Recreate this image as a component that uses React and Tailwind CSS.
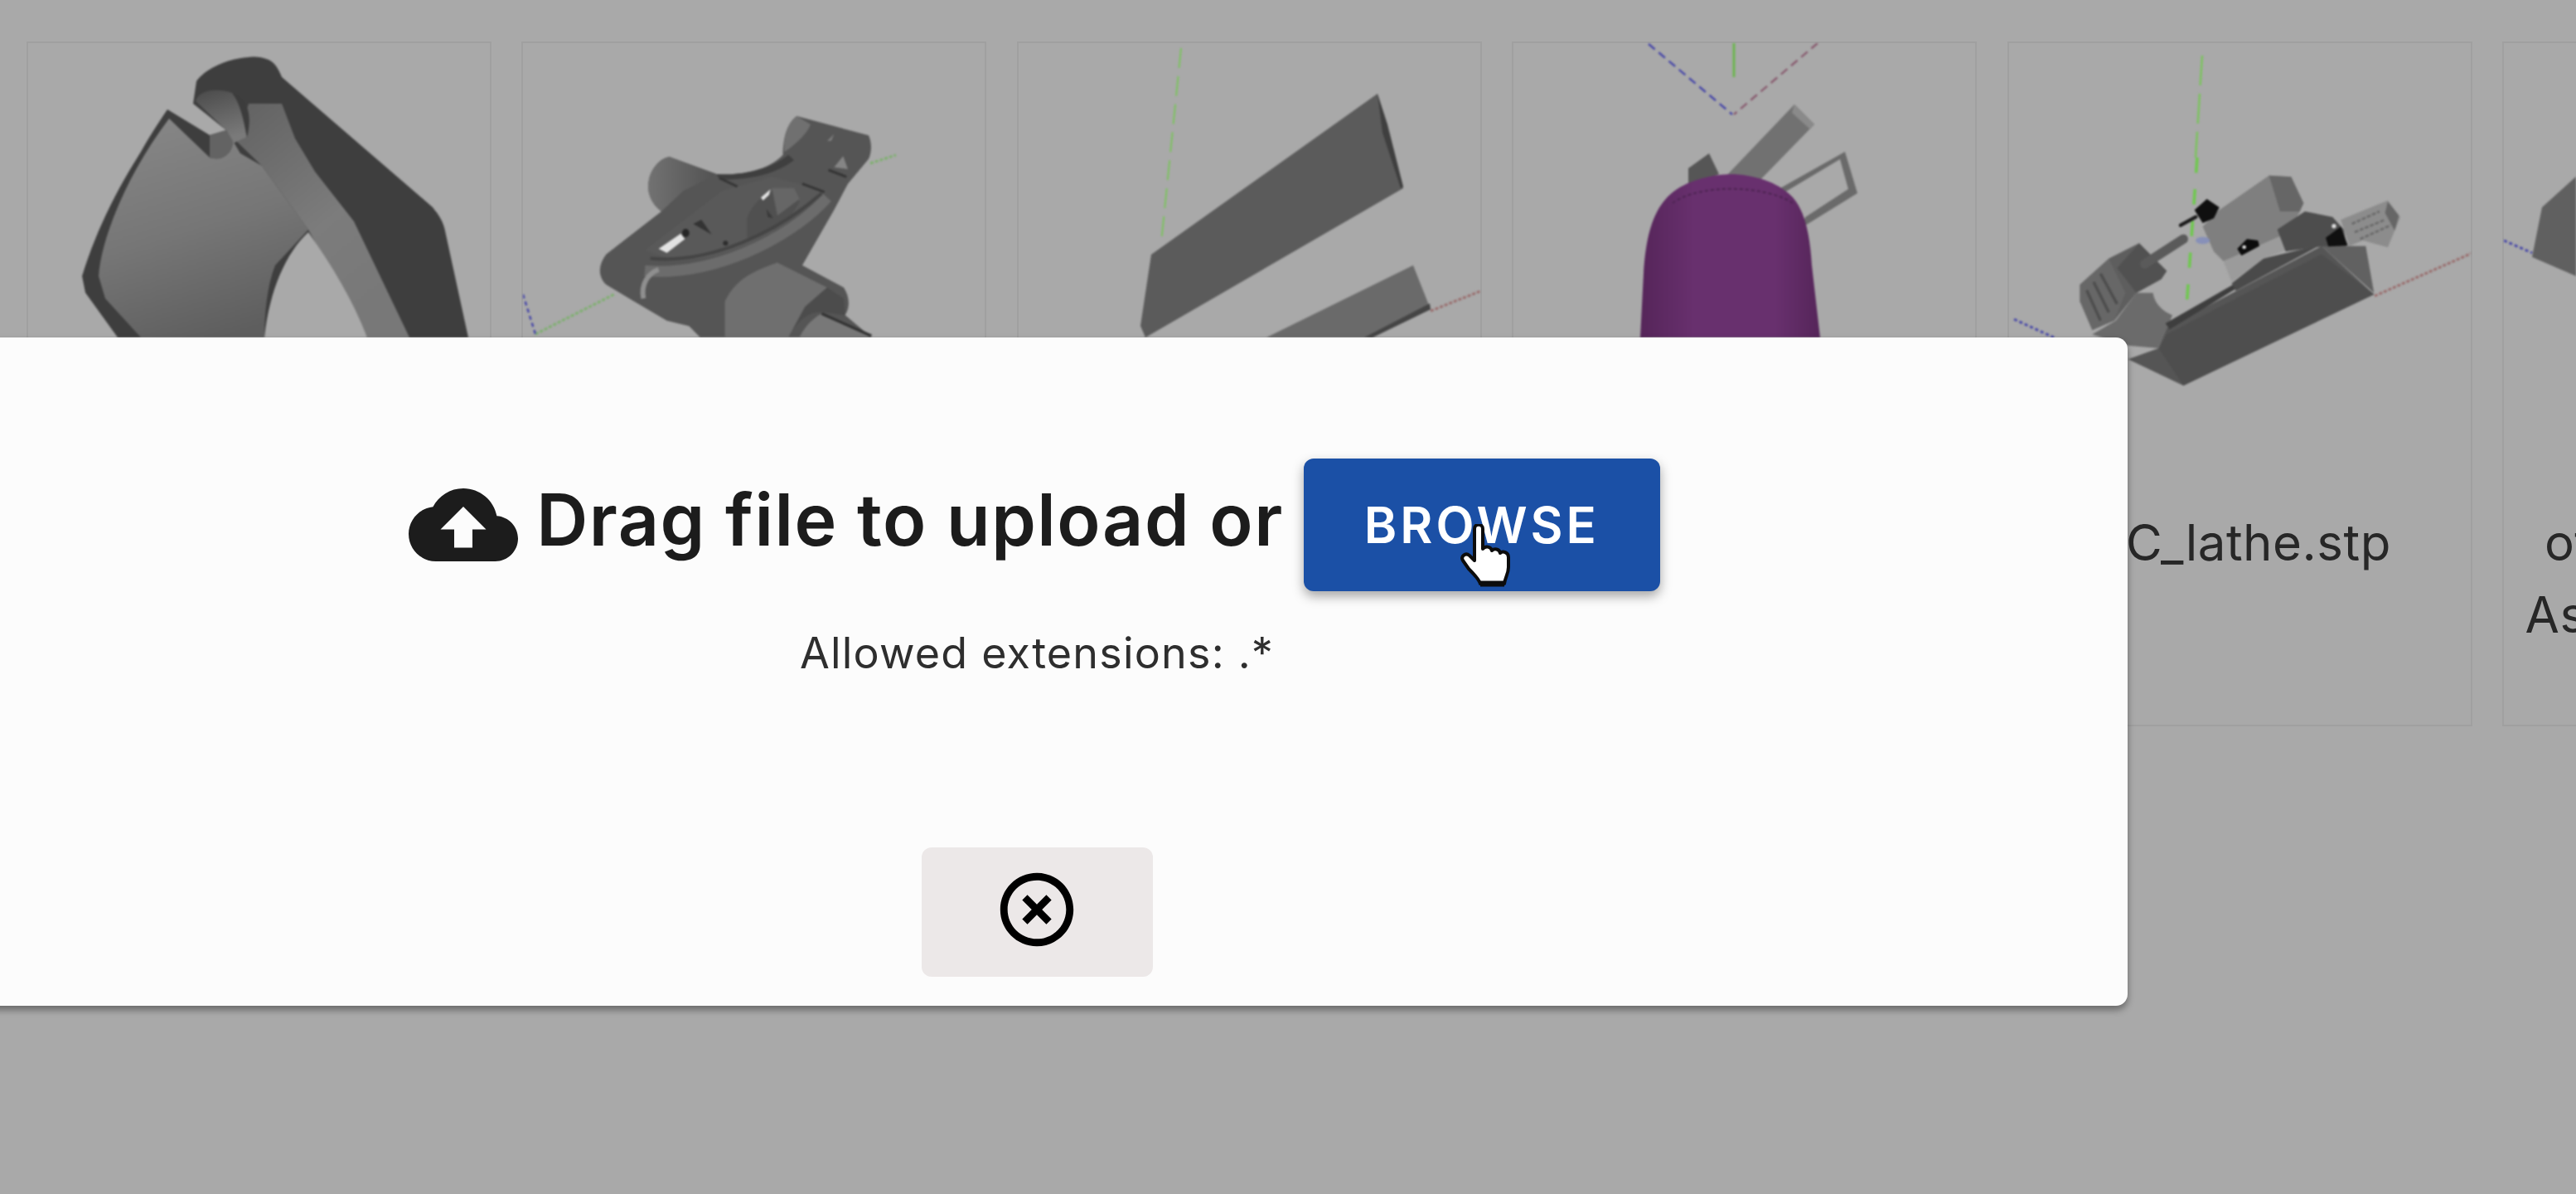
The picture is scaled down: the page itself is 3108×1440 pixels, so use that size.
import React from "react";

const FONT = "font-['Inter','Liberation_Sans',sans-serif]";

/* thumbnails use page coordinates, the viewBox shifts them into the card */
const Thumb = ({ x, children }) => (
  <svg
    viewBox={`${x + 2} 52 557 559`}
    className="block w-[557px] h-[559px] shrink-0 blur-[0.8px]"
  >
    {children}
  </svg>
);

const Bracket = () => (
  <Thumb x={32}>
    <defs>
      <linearGradient id="faceA" x1="0.3" y1="0" x2="0.6" y2="1">
        <stop offset="0" stopColor="#868686" />
        <stop offset="0.5" stopColor="#767676" />
        <stop offset="1" stopColor="#5e5e5e" />
      </linearGradient>
      <linearGradient id="stripA" x1="0" y1="0" x2="0.6" y2="1">
        <stop offset="0" stopColor="#626262" />
        <stop offset="0.6" stopColor="#7c7c7c" />
        <stop offset="1" stopColor="#787878" />
      </linearGradient>
      <linearGradient id="hookA" x1="0" y1="0" x2="0.3" y2="1">
        <stop offset="0" stopColor="#4a4a4a" />
        <stop offset="1" stopColor="#7a7a7a" />
      </linearGradient>
    </defs>
    {/* dark silhouette */}
    <path
      d="M202 132 C190 150 180 165 170 183 C150 215 120 265 99 333 L103 353 L142 407 L565 407 L538 283 C535 265 528 258 522 250 L340 93 C335 80 330 75 324 72 C315 68 305 68 300 69 C280 70 250 80 237 98 L233 125 L273 157 L253 163 Z"
      fill="#3e3e3e"
    />
    {/* main face */}
    <path
      d="M204 143 L253 190 C268 195 281 185 281 170 L290 185 L316 200 L372 277 L332 320 C322 345 319 380 319 407 L170 407 L127 360 L119 333 C122 290 150 215 204 143 Z"
      fill="url(#faceA)"
    />
    {/* light strip beside the dark band */}
    <path d="M316 200 L372 277 L443 407 L494 407 L427 267 L380 207 L356 167 L340 125 L300 125 L285 170 Z" fill="url(#stripA)" />
    {/* hole through the part */}
    <path d="M372 280 C345 305 325 350 319 407 L443 407 C425 360 400 320 372 280 Z" fill="#a9a9a9" />
    {/* hook around the slot */}
    <path d="M236 122 C240 108 262 106 280 112 C296 120 304 140 298 165 L281 173 L273 157 Z" fill="url(#hookA)" />
    <path d="M280 112 C296 116 306 136 298 166 C294 145 290 125 280 112 Z" fill="#3c3c3c" />
    <path d="M253 163 L273 157 L281 170 C281 185 268 195 253 190 Z" fill="#636363" />
  </Thumb>
);

const Clamp = () => (
  <Thumb x={631}>
    <defs>
      <linearGradient id="lobeA" x1="0" y1="0" x2="1" y2="0">
        <stop offset="0" stopColor="#727272" />
        <stop offset="1" stopColor="#525252" />
      </linearGradient>
    </defs>
    <path d="M648 403 L743 355" stroke="#7fb070" strokeWidth="3" strokeDasharray="4 2" />
    <path d="M1052 197 L1083 187" stroke="#7fb070" strokeWidth="3" strokeDasharray="4 2" />
    <path d="M633 355 L648 403" stroke="#4a4aa8" strokeWidth="2.5" strokeDasharray="5 4" />
    <g transform="translate(700 130) scale(0.3333)">
      <path
        d="M790 30 L1050 100 C1062 125 1062 160 1050 185 L975 275 L925 370 L810 570 L960 650 C980 680 985 720 965 750 L1060 830 L440 830 L400 790 L320 770 L200 700 L100 640 C70 610 70 570 100 530 L300 375 C260 345 245 300 255 260 C265 215 300 180 330 178 L500 240 C560 245 680 235 740 170 C740 120 750 60 790 30 Z"
        fill="#555555"
      />
      <path d="M300 375 C260 345 245 300 255 260 C265 215 300 180 330 178 L500 240 L380 300 Z" fill="url(#lobeA)" />
      <path d="M790 30 C750 60 740 120 745 160 C790 130 830 90 840 60 Z" fill="#707070" />
      {/* top plate */}
      <path d="M240 515 L520 300 L700 250 L890 300 L800 380 C700 470 500 570 330 545 Z" fill="#595959" />
      <path d="M610 400 C630 340 690 290 760 290 L800 340 C760 420 690 460 610 470 Z" fill="#505050" />
      <path d="M700 290 L780 290 L800 330 L720 390 Z" fill="#666666" />
      <path d="M500 240 C560 245 680 235 760 170 L780 190 C700 250 600 260 510 260 Z" fill="#3f3f3f" />
      {/* rib */}
      <path d="M240 590 C480 610 760 480 900 325" stroke="#6c6c6c" strokeWidth="40" fill="none" />
      <path d="M260 545 C480 565 720 450 880 310" stroke="#444444" strokeWidth="12" fill="none" />
      {/* lower barrel */}
      <path d="M530 700 C560 640 600 600 720 560 L900 650 L820 720 L760 830 L530 830 Z" fill="#6f6f6f" />
      <path d="M760 830 C790 770 840 730 890 740 L965 750 L960 690 L900 650 L820 720 Z" fill="#4c4c4c" />
      <path d="M880 745 L1060 830 L800 830 C820 790 850 760 880 745 Z" fill="#787878" />
      <path d="M880 745 L1060 825" stroke="#333333" strokeWidth="10" />
      <path d="M235 690 C225 640 250 600 290 585" stroke="#8f8f8f" strokeWidth="18" fill="none" />
      {/* holes and small details */}
      <path d="M290 510 L370 455 L385 475 L320 525 Z" fill="#e2e2e2" />
      <path d="M660 325 L695 295 L690 315 L668 335 Z" fill="#e2e2e2" />
      <ellipse cx="388" cy="453" rx="13" ry="15" fill="#262626" />
      <circle cx="532" cy="490" r="9" fill="#2e2e2e" />
      <path d="M415 420 L445 405 L482 458 Z" fill="#333333" />
      <path d="M680 365 L705 400 L685 395 Z" fill="#3a3a3a" />
      <path d="M512 255 L575 285 M810 275 L890 305 M905 225 L970 250" stroke="#353535" strokeWidth="9" />
      <path d="M925 215 L958 175 L975 222 Z" fill="#858585" />
      <path d="M900 120 L925 95 L915 120 Z" fill="#7c7c7c" />
    </g>
  </Thumb>
);

const Blades = () => (
  <Thumb x={1227}>
    <path d="M1425 58 L1401 293" stroke="#7cc35f" strokeWidth="2" strokeDasharray="24 10" />
    <path d="M1726 375 L1789 350" stroke="#9a6f6f" strokeWidth="3" strokeDasharray="4 2" />
    <path d="M1662 113 L1693 227 L1382 407 L1376 393 L1389 307 Z" fill="#5b5b5b" />
    <path d="M1662 113 L1674 150 L1693 225 L1690 227 L1668 160 Z" fill="#3f3f3f" />
    <path d="M1705 320 L1726 373 L1656 407 L1528 407 Z" fill="#6a6a6a" />
    <path d="M1726 373 L1656 407 L1646 407 L1725 366 Z" fill="#454545" />
  </Thumb>
);

const Cylinder = () => (
  <Thumb x={1826}>
    <defs>
      <linearGradient id="purpleA" x1="0" y1="0" x2="1" y2="0">
        <stop offset="0" stopColor="#552559" />
        <stop offset="0.3" stopColor="#68306e" />
        <stop offset="0.75" stopColor="#68306e" />
        <stop offset="1" stopColor="#552559" />
      </linearGradient>
    </defs>
    <path d="M2094 50 L2094 93" stroke="#6cb650" strokeWidth="3" />
    <path d="M1991 53 L2092 138" stroke="#4a4aa8" strokeWidth="2.5" strokeDasharray="10 6" />
    <path d="M2195 52 L2094 138" stroke="#8a5f72" strokeWidth="2.5" strokeDasharray="10 6" />
    <path d="M2167 126 L2191 150 L2118 225 L2082 215 Z" fill="#717171" />
    <path d="M2167 126 L2191 150 L2186 156 L2164 136 Z" fill="#8a8a8a" />
    <path d="M2228 183 L2243 233 L2175 275 L2180 262 L2232 228 L2222 192 L2150 235 L2148 228 Z" fill="#6a6a6a" />
    <path d="M2064 185 L2076 210 L2039 225 L2039 203 Z" fill="#565656" />
    <path
      d="M1981 407 L1985 330 C1988 280 1998 250 2020 232 C2040 216 2070 210 2094 210 C2125 212 2150 222 2165 238 C2180 255 2186 285 2188 320 L2198 407 Z"
      fill="url(#purpleA)"
    />
    <path d="M2020 245 C2050 222 2130 222 2165 245" stroke="#4d2452" strokeWidth="2" strokeDasharray="4 3" fill="none" />
  </Thumb>
);

const Lathe = () => (
  <Thumb x={2421}>
    <path d="M2429 385 L2477 407" stroke="#4a4aa8" strokeWidth="3" strokeDasharray="4 3" />
    <path d="M2864 357 L2982 305" stroke="#9a6f6f" strokeWidth="3" strokeDasharray="4 2" />
    <path d="M2656 67 L2648 190" stroke="#7cc35f" strokeWidth="2.5" strokeDasharray="36 10" />
    <g transform="translate(2480 190) scale(0.3333)">
      <path d="M510 0 L470 560" stroke="#70c850" strokeWidth="11" strokeDasharray="55 60" />
      {/* base */}
      <path d="M960 320 L1120 320 L1150 490 Z" fill="#616161" />
      <path d="M400 615 L960 320 L1150 495 L460 825 L260 730 L370 690 Z" fill="#555555" />
      <path d="M400 640 L960 350 L1150 495 L460 825 L370 690 Z" fill="#4e4e4e" />
      {/* headstock */}
      <path d="M215 590 L290 490 L350 490 C355 530 390 560 420 570 L400 620 L370 690 L260 680 L130 640 Z" fill="#6b6b6b" />
      <path d="M190 365 L300 310 L290 490 L210 590 Z" fill="#5e5e5e" />
      <path d="M85 460 L190 365 L250 490 L210 590 L130 625 L85 520 Z" fill="#676767" />
      <path d="M110 480 L160 590 M135 450 L190 560 M160 420 L220 530" stroke="#4d4d4d" strokeWidth="10" />
      <path d="M220 400 L300 310 L400 410 L380 440 L290 490 Z" fill="#515151" />
      <path d="M320 385 L460 295" stroke="#5a5a5a" strokeWidth="34" strokeLinecap="round" />
      {/* rail */}
      <path d="M395 600 L640 460 L650 475 L410 622 Z" fill="#3e3e3e" />
      <path d="M635 455 L750 365 L960 315 L650 482 Z" fill="#4a4a4a" />
      {/* turret */}
      <path d="M590 190 L770 65 L850 70 L895 165 L880 200 L820 285 L605 375 L570 340 L530 250 Z" fill="#7f7f7f" />
      <path d="M770 65 L850 70 L895 165 L880 195 L810 195 Z" fill="#666666" />
      <path d="M450 245 L505 215" stroke="#1c1c1c" strokeWidth="13" strokeLinecap="round" />
      <path d="M500 190 L545 150 L590 180 L570 220 L530 237 Z" fill="#0f0f0f" />
      <ellipse cx="530" cy="300" rx="26" ry="13" fill="#8790b8" />
      {/* carriage */}
      <path d="M605 375 L820 280 L832 335 L750 365 L635 450 Z" fill="#9b9b9b" />
      <path d="M655 330 L690 295 L730 300 L735 320 L670 355 Z" fill="#0c0c0c" />
      <circle cx="680" cy="324" r="7" fill="#e0e0e0" />
      {/* right side mechanism */}
      <path d="M800 260 L900 195 L1000 215 L1040 260 L1050 320 L960 322 L830 340 Z" fill="#4d4d4d" />
      <path d="M975 290 L1030 250 L1055 318 L985 322 Z" fill="#101010" />
      <circle cx="1005" cy="248" r="8" fill="#dcdcdc" />
      <path d="M1030 225 L1200 155 L1245 215 L1200 325 L1110 300 L1060 320 Z" fill="#8c8c8c" />
      <path d="M1070 240 L1170 195 M1080 270 L1190 225 M1100 295 L1210 245" stroke="#6a6a6a" strokeWidth="8" strokeDasharray="14 6" />
      <path d="M1200 160 L1240 210 L1225 265 L1190 200 Z" fill="#666666" />
    </g>
  </Thumb>
);

const Partial = () => (
  <Thumb x={3019}>
    <path d="M3021 290 L3055 305" stroke="#4a4aa8" strokeWidth="3" strokeDasharray="4 3" />
    <path d="M3108 213 L3067 250 L3055 310 L3108 333 Z" fill="#606060" />
  </Thumb>
);

const cards = [
  { x: 32, art: <Bracket /> },
  { x: 631, art: <Clamp /> },
  { x: 1227, art: <Blades /> },
  { x: 1826, art: <Cylinder /> },
  { x: 2421, art: <Lathe />, lines: ["NC_lathe.stp"] },
  { x: 3019, art: <Partial />, lines: ["offset_bracket_1", "Assembly_M2.stp"] },
];

const Card = ({ art, lines = [] }) => (
  <div className="w-[561px] h-[826px] shrink-0 border-2 border-[#a0a0a0] flex flex-col">
    {art}
    <p className="text-[60px] leading-[87px] tracking-[0.5px] text-[#272727] whitespace-nowrap flex flex-col items-center">
      {lines.map((l) => (
        <span key={l}>{l}</span>
      ))}
    </p>
  </div>
);

const Hand = () => (
  <svg viewBox="0 0 66 76" className="absolute left-[189px] top-[79px] w-[66px] h-[76px]">
    <path
      d="M17 6 C17 -1 27 -1 27 6 L27 30 C30 26 37 27 38 32 C41 29 47 30 48 35 C51 32 58 34 58 40 L58 52 C58 60 54 64 53 72 L24 72 C22 66 16 60 10 54 L3 44 C0 39 6 34 11 38 L17 44 Z"
      fill="#ffffff"
      stroke="#0c0c0c"
      strokeWidth="4"
      strokeLinejoin="round"
    />
    <path d="M24 72 L53 72" stroke="#0c0c0c" strokeWidth="7" />
  </svg>
);

const App = () => {
  return (
    <div className={`relative w-[3108px] h-[1440px] overflow-hidden bg-[#a9a9a9] ${FONT}`}>
      <div className="flex gap-[36.4px] pl-[32px] pt-[50px]">
        {cards.map((c) => (
          <Card key={c.x} art={c.art} lines={c.lines} />
        ))}
      </div>

      {/* upload dialog */}
      <div className="absolute left-[-65px] top-[407px] w-[2632px] h-[806px] rounded-[14px] bg-[#fcfcfc] shadow-[0_5px_9px_rgba(0,0,0,0.38)] flex flex-col items-center pt-[146px] pb-[35px]">
        <div className="flex items-center mr-[6px]">
          <svg viewBox="0 0 24 24" className="w-[132px] h-[132px] mr-[22px] fill-[#1c1c1c]">
            <path d="M19.35 10.04C18.67 6.59 15.64 4 12 4 9.11 4 6.6 5.64 5.35 8.04 2.34 8.36 0 10.91 0 14c0 3.31 2.69 6 6 6h13c2.76 0 5-2.24 5-5 0-2.64-2.05-4.78-4.65-4.96zM14 13v4h-4v-4H7l5-5 5 5h-3z" />
          </svg>
          <span className="mb-[12px] text-[86px] leading-[100px] tracking-[1.5px] font-semibold text-[#1c1c1c] whitespace-nowrap">
            Drag file to upload or
          </span>
          <button className="relative ml-[24px] w-[430px] h-[160px] rounded-[12px] bg-[#1b50a6] text-white text-[60px] font-semibold tracking-[4px] shadow-[0_6px_14px_rgba(0,0,0,0.35)]">
            BROWSE
            <Hand />
          </button>
        </div>
        <p className="mt-[42px] text-[52px] leading-[66px] tracking-[1.2px] text-[#2e2e2e] whitespace-nowrap">
          Allowed extensions: .*
        </p>
        <button className="mt-auto w-[279px] h-[156px] rounded-[12px] bg-[#ece8e8] flex items-center justify-center">
          <svg viewBox="0 0 24 24" className="mb-[6px] w-[106px] h-[106px] fill-black">
            <path d="M14.59 8L12 10.59 9.41 8 8 9.41 10.59 12 8 14.59 9.41 16 12 13.41 14.59 16 16 14.59 13.41 12 16 9.41 14.59 8zM12 2C6.47 2 2 6.47 2 12s4.47 10 10 10 10-4.47 10-10S17.53 2 12 2zm0 18c-4.41 0-8-3.59-8-8s3.59-8 8-8 8 3.59 8 8-3.59 8-8 8z" />
          </svg>
        </button>
      </div>
    </div>
  );
};

export default App;
